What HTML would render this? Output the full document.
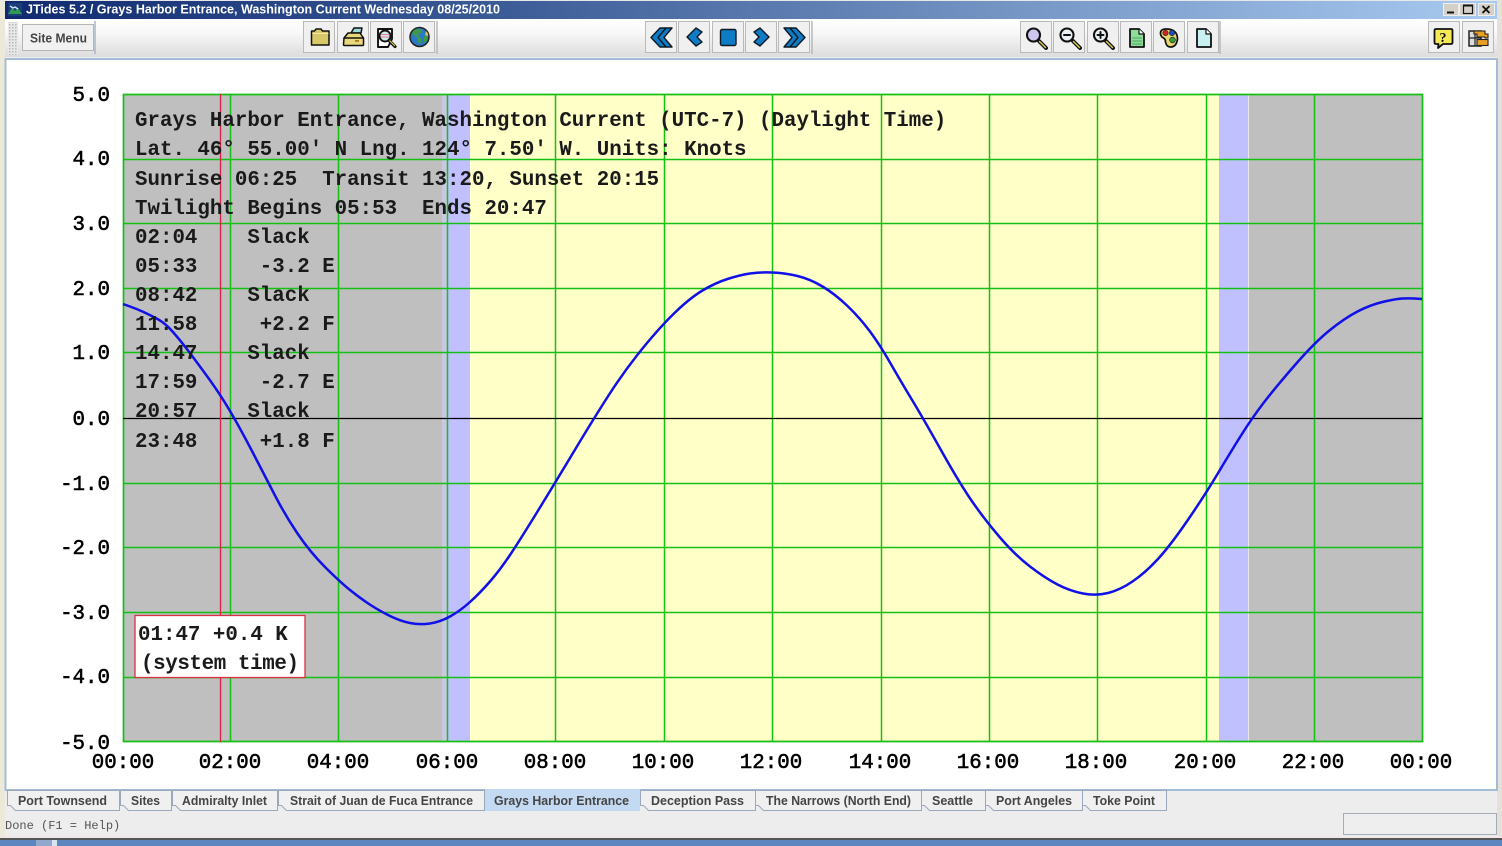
<!DOCTYPE html>
<html><head><meta charset="utf-8"><title>JTides</title>
<style>
html,body{margin:0;padding:0;background:#fff;overflow:hidden}
svg{display:block;filter:blur(.35px)}
text{white-space:pre}
.m{font-family:"Liberation Mono",monospace;font-size:20.8px;font-weight:bold;fill:#1a1a1a}
.a{font-family:"Liberation Mono",monospace;font-size:20.8px;fill:#000;stroke:#000;stroke-width:.55px}
.t{font-family:"Liberation Sans",sans-serif;font-size:12.6px;font-weight:bold;fill:#444}
.b{fill:#f0f0f0;stroke:#b9b9b9}
.k{stroke:#111;stroke-width:1.5;stroke-linejoin:round;stroke-linecap:round}
</style></head><body>
<svg width="1502" height="846" viewBox="0 0 1502 846" xmlns="http://www.w3.org/2000/svg">
<defs>
<linearGradient id="tb" x1="0" x2="1" y1="0" y2="0"><stop offset="0" stop-color="#0f2a70"/><stop offset=".33" stop-color="#3b5b97"/><stop offset=".66" stop-color="#7393c3"/><stop offset="1" stop-color="#a8caf0"/></linearGradient>
<linearGradient id="bar" x1="0" x2="0" y1="0" y2="1"><stop offset="0" stop-color="#ffffff"/><stop offset=".35" stop-color="#f8f8f8"/><stop offset="1" stop-color="#dcdcdc"/></linearGradient>
<pattern id="grip" width="3" height="3" patternUnits="userSpaceOnUse"><rect width="3" height="3" fill="#e8e8e8"/><rect width="1.5" height="1.5" fill="#b8b8b8"/></pattern>
</defs>

<rect width="1502" height="846" fill="#ededed"/>
<rect x="0" y="0" width="5" height="846" fill="#ece9d8"/>
<!-- title bar -->
<rect x="5" y="1" width="1492" height="18" fill="url(#tb)"/>
<rect x="0" y="0" width="1502" height="1" fill="#e8e8e8"/>
<rect x="1497" y="0" width="5" height="840" fill="#e4e2d8"/>
<g>
<rect x="8" y="3" width="14" height="13" fill="#1c3d7a"/>
<path d="M8 14l4-6 3 3 3-3 4 6z" fill="#2f9a55"/>
<path d="M10 6l3 2 2-1 3 2" stroke="#cfe8ff" stroke-width="1.4" fill="none"/>
</g>
<text x="26" y="13.500" font-family="Liberation Sans, sans-serif" font-size="12.600" font-weight="bold" fill="#fff" textLength="474" lengthAdjust="spacingAndGlyphs">JTides 5.2 / Grays Harbor Entrance, Washington Current Wednesday 08/25/2010</text>
<!-- window buttons -->
<g fill="#d4d0c8" stroke="#eeeeee">
<rect x="1443.500" y="3.500" width="15" height="12"/><rect x="1459.500" y="3.500" width="16" height="12"/><rect x="1478.500" y="3.500" width="16" height="12"/>
</g>
<path d="M1447 12.500h7" stroke="#111" stroke-width="2"/>
<rect x="1463.500" y="5.500" width="9" height="8" fill="none" stroke="#111" stroke-width="1.200"/><path d="M1463 5.500h10" stroke="#111" stroke-width="2"/>
<path d="M1482.500 6l7 7m0-7l-7 7" stroke="#111" stroke-width="1.800"/>

<!-- toolbar -->
<rect x="5" y="19" width="1492" height="38" fill="url(#bar)"/>
<rect x="8" y="22" width="10" height="33" fill="url(#grip)"/>
<rect x="22.500" y="24.500" width="71" height="26" fill="#f1f1f1" stroke="#b5b5b5"/>
<path d="M95 21v33" stroke="#aab4c8" stroke-width="1.500"/>
<text x="30" y="42.500" class="t" textLength="57" lengthAdjust="spacingAndGlyphs" style="font-size:13px">Site Menu</text>

<!-- button frames -->
<g class="b">
<rect x="303.500" y="21.500" width="31" height="31"/><rect x="337.500" y="21.500" width="31" height="31"/><rect x="370.500" y="21.500" width="31" height="31"/><rect x="403.500" y="21.500" width="31" height="31"/>
<rect x="645.500" y="21.500" width="31" height="31"/><rect x="678.500" y="21.500" width="31" height="31"/><rect x="712.500" y="21.500" width="31" height="31"/><rect x="745.500" y="21.500" width="31" height="31"/><rect x="778.500" y="21.500" width="31" height="31"/>
<rect x="1020.500" y="21.500" width="31" height="31"/><rect x="1053.500" y="21.500" width="31" height="31"/><rect x="1087.500" y="21.500" width="31" height="31"/><rect x="1120.500" y="21.500" width="31" height="31"/><rect x="1153.500" y="21.500" width="31" height="31"/><rect x="1187.500" y="21.500" width="31" height="31"/>
<rect x="1428.500" y="21.500" width="31" height="31"/><rect x="1462.500" y="21.500" width="31" height="31"/>
</g>
<path d="M437 21v33M812 21v33M1220 21v33" stroke="#b8b8b8" stroke-width="1.500"/>

<!-- left icons -->
<path class="k" d="M311.500 45v-14h3l1.500-2h5l1.500 2h6.500v14z" fill="#d8c868"/>
<path d="M312.500 33.500h16" stroke="#f4eaa8" stroke-width="1"/>
<g class="k">
<path d="M351 33l3-5h8l-1 5z" fill="#9fd8d8"/>
<path d="M344 38l4-5h12l3.500 5v6.500q0 1-1 1h-18q-1 0-1-1z" fill="#e8d87a"/>
<path d="M344 38h19.500" fill="none"/>
</g>
<rect x="355" y="40" width="4" height="1.800" fill="#b07820"/>
<g class="k">
<path d="M378 29h14v10l-4 8h-10z" fill="#fff" stroke-width="1.900"/>
<circle cx="385" cy="36" r="5.500" fill="#cfeaea" stroke-width="1.900"/>
<path d="M389 40.500l6 6" stroke-width="3.200"/>
</g>
<path d="M380.500 34.500h9M380.500 37h9" stroke="#e8789a" stroke-width="1"/>
<path d="M389.500 40.500l5.500 5.500" stroke="#d8c858" stroke-width="1.200"/>
<circle cx="419.500" cy="37" r="9.500" fill="#2a78c8" stroke="#222" stroke-width="1.500"/>
<path d="M414 30q5-2 8 0l-1 3-3 1 1 3 3 2-1 5-3-2-1-5-4-2q-2-2 1-5zM424 36l4 0-1 5-3 2z" fill="#3e9a4a"/>
<path d="M426 31q3 3 2 5l-3-1z" fill="#d8c458"/>

<!-- nav icons -->
<g fill="#0e7cc4" stroke="#0d1a26" stroke-width="1.400" stroke-linejoin="round">
<path d="M666 28L657 37.500L666 47H672L664 37.500L672 28z"/>
<path d="M660 28L651 37.500L660 47H666L658 37.500L666 28z"/>
<path d="M696 28L687 37L696 46L702 42L697 37L702 32z"/>
<rect x="720.500" y="29.500" width="15.500" height="16" rx="1.500"/>
<path d="M760 28L769 37L760 46L754 42L759 37L754 32z"/>
<path d="M790 28L799 37.500L790 47H784L792 37.500L784 28z"/>
<path d="M796 28L805 37.500L796 47H790L798 37.500L790 28z"/>
</g>

<!-- zoom icons -->
<g class="k" fill="none">
<g><path d="M1039 41l7 7" stroke-width="4"/><path d="M1039.500 41.500l6 6" stroke="#d8c858" stroke-width="1.500"/><circle cx="1033.500" cy="35" r="6.500" fill="#cdc4f0" stroke-width="2.100"/></g>
<g><path d="M1073 41l7 7" stroke-width="4"/><path d="M1073.500 41.500l6 6" stroke="#d8c858" stroke-width="1.500"/><circle cx="1067" cy="35" r="6.500" fill="#eaf2f4" stroke-width="2.100"/><path d="M1064 35h6" stroke-width="2"/></g>
<g><path d="M1106 41l7 7" stroke-width="4"/><path d="M1106.500 41.500l6 6" stroke="#d8c858" stroke-width="1.500"/><circle cx="1100.500" cy="35" r="6.500" fill="#eaf2f4" stroke-width="2.100"/><path d="M1097.500 35h6M1100.500 32v6" stroke-width="2"/></g>
<path d="M1130 29h9l5 5v13h-14z" fill="#8fdc98" stroke-width="1.800"/>
<path d="M1139 29v5h5" fill="#fff" stroke-width="1.200"/>
<path d="M1132.500 38h9M1132.500 41h9M1132.500 44h9" stroke="#48a860" stroke-width="1"/>
<path d="M1197 29h9l5 5v13h-14z" fill="#c8f0f0" stroke-width="1.800"/>
<path d="M1206 29v5h5" fill="#fff" stroke-width="1.200"/>
</g>
<path d="M1166 29q-6 0-5.500 5 .5 3 3 4 2 1 2 4 1 5 5 5 6 0 7-8 0-10-11.500-10z" fill="#e8d870" stroke="#111" stroke-width="1.700"/>
<circle cx="1165.500" cy="33" r="2.700" fill="#d82030" stroke="#222" stroke-width=".6"/>
<circle cx="1172" cy="33" r="2.700" fill="#2048c8" stroke="#222" stroke-width=".6"/>
<circle cx="1172.500" cy="40" r="2.900" fill="#389838" stroke="#222" stroke-width=".6"/>

<!-- help icons -->
<path d="M1436 29h15q1.500 0 1.500 1.500v12q0 1.500-1.500 1.500h-8l-5 4 .5-4h-2.500q-1.500 0-1.500-1.500v-12q0-1.500 1.500-1.500z" fill="#f4ea58" stroke="#111" stroke-width="1.800" stroke-linejoin="round"/>
<text x="1439.500" y="42" font-family="Liberation Serif, serif" font-size="14" font-weight="bold" fill="#111">?</text>
<rect x="1469" y="31" width="12" height="15" fill="#dcdcdc" stroke="#222" stroke-width="1.500"/>
<path d="M1469 38h12M1475 31v15" stroke="#222" stroke-width="1.200"/>
<path d="M1474 31h11v3h3v4h-3v-1h-8v-3h-3z" fill="#e8a020" stroke="#222" stroke-width="1.100"/>
<rect x="1477" y="39.500" width="11" height="6" fill="#e8a020" stroke="#222" stroke-width="1.100"/>

<!-- content -->
<rect x="5.500" y="59" width="1491.500" height="731" fill="#fff" stroke="#a4bcd8" stroke-width="2"/>

<!-- plot bands -->
<rect x="123" y="94" width="319" height="648" fill="#bfbfbf"/>
<rect x="442" y="94" width="5" height="648" fill="#c8c8e0"/>
<rect x="447" y="94" width="23" height="648" fill="#c0c0ff"/>
<rect x="470" y="94" width="749" height="648" fill="#ffffc8"/>
<rect x="1219" y="94" width="29" height="648" fill="#c0c0ff"/>
<rect x="1248" y="94" width="174" height="648" fill="#bfbfbf"/>
<path d="M1248.500 94v648" stroke="#e8e8e8"/>

<!-- grid -->
<g stroke="#14c014" stroke-width="1.500" fill="none">
<path d="M123.500 94.500h1299v647h-1299z" stroke-width="1.700"/>
<path d="M230.500 94v648M338.500 94v648M447.500 94v648M555.500 94v648M664.500 94v648M772.500 94v648M881.500 94v648M989.500 94v648M1097.500 94v648M1206.500 94v648M1314.500 94v648"/>
<path d="M123 159.500h1299M123 223.500h1299M123 288.500h1299M123 352.500h1299M123 483.500h1299M123 547.500h1299M123 612.500h1299M123 677.500h1299"/>
</g>
<path d="M123 418.500h1299" stroke="#000" stroke-width="1.200"/>
<path d="M220.500 94v648" stroke="#e02040" stroke-width="1.300"/>

<!-- curve -->
<path fill="none" stroke="#1010e8" stroke-width="2.500" stroke-linejoin="round" d="M123,304 L130,306.500 Q137,309 143.500,312 Q150,315 157.500,319 Q165,323 172.500,331.500 Q180,340 188,350.500 Q196,361 208,377.500 Q220,394 230,411 Q240,428 252.500,452 Q265,476 275,495.500 Q285,515 297.500,533.500 Q310,552 325,567 Q340,582 350,590 Q360,598 369,604 Q378,610 389,615.500 Q400,621 410,623 Q420,625 430,623.500 Q440,622 450,616.500 Q460,611 470,602 Q480,593 490,581.500 Q500,570 510,555 Q520,540 537.500,511.500 Q555,483 574.500,450.500 Q594,418 609.500,394 Q625,370 642.500,348.500 Q660,327 675,312.500 Q690,298 702.500,290.500 Q715,283 727.500,279 Q740,275 750,273.500 Q760,272 772.500,272.500 Q785,273 797.500,276 Q810,279 822.500,286.500 Q835,294 847.500,306 Q860,318 870,331.500 Q880,345 890,362.500 Q900,380 911.500,399 Q923,418 941.500,451 Q960,484 972.500,502 Q985,520 1000,537.500 Q1015,555 1030,566.500 Q1045,578 1057.500,584.500 Q1070,591 1083,593.500 Q1096,596 1108,593 Q1120,590 1132.500,581.500 Q1145,573 1157.500,559.500 Q1170,546 1187.500,520.500 Q1205,495 1217.500,474 Q1230,453 1241,435.500 Q1252,418 1263.500,403 Q1275,388 1295,365 Q1315,342 1330,330 Q1345,318 1357.500,311.500 Q1370,305 1382.500,302 Q1395,299 1402.500,298.500 Q1410,298 1422,299"/>

<!-- overlay text -->
<g class="m">
<text x="135" y="126">Grays Harbor Entrance, Washington Current (UTC-7) (Daylight Time)</text>
<text x="135" y="155">Lat. 46° 55.00' N Lng. 124° 7.50' W. Units: Knots</text>
<text x="135" y="185">Sunrise 06:25  Transit 13:20, Sunset 20:15</text>
<text x="135" y="214">Twilight Begins 05:53  Ends 20:47</text>
<text x="135" y="243">02:04    Slack</text>
<text x="135" y="272">05:33     -3.2 E</text>
<text x="135" y="301">08:42    Slack</text>
<text x="135" y="330">11:58     +2.2 F</text>
<text x="135" y="359">14:47    Slack</text>
<text x="135" y="388">17:59     -2.7 E</text>
<text x="135" y="417">20:57    Slack</text>
<text x="135" y="447">23:48     +1.8 F</text>
</g>

<!-- tooltip -->
<rect x="135" y="615.500" width="170" height="62" fill="#fff" stroke="#d83040" stroke-width="1.300"/>
<g class="m">
<text x="138" y="640">01:47 +0.4 K</text>
<text x="141" y="669" textLength="158" lengthAdjust="spacing">(system time)</text>
</g>

<!-- y axis -->
<g class="a" text-anchor="end">
<text x="110" y="101">5.0</text><text x="110" y="165">4.0</text><text x="110" y="230">3.0</text><text x="110" y="295">2.0</text><text x="110" y="359">1.0</text><text x="110" y="425">0.0</text><text x="110" y="490">-1.0</text><text x="110" y="554">-2.0</text><text x="110" y="619">-3.0</text><text x="110" y="683">-4.0</text><text x="110" y="749">-5.0</text>
</g>
<!-- x axis -->
<g class="a" text-anchor="middle">
<text x="123" y="768">00:00</text><text x="230" y="768">02:00</text><text x="338" y="768">04:00</text><text x="447" y="768">06:00</text><text x="555" y="768">08:00</text><text x="663" y="768">10:00</text><text x="771" y="768">12:00</text><text x="880" y="768">14:00</text><text x="988" y="768">16:00</text><text x="1096" y="768">18:00</text><text x="1205" y="768">20:00</text><text x="1313" y="768">22:00</text><text x="1421" y="768">00:00</text>
</g>

<!-- tabs -->
<g fill="#f0f0f0" stroke="#9aa8bc">
<path d="M7.500 790.500h112v20h-104l-5-5h-3z"/>
<path d="M120.500 790.500h51v20h-43l-5-5h-3z"/>
<path d="M172.500 790.500h105v20h-97l-5-5h-3z"/>
<path d="M278.500 790.500h206v20h-198l-5-5h-3z"/>
<path d="M640.500 790.500h115v20h-107l-5-5h-3z"/>
<path d="M755.500 790.500h166v20h-158l-5-5h-3z"/>
<path d="M921.500 790.500h64v20h-56l-5-5h-3z"/>
<path d="M985.500 790.500h97v20h-89l-5-5h-3z"/>
<path d="M1082.500 790.500h84v20h-76l-5-5h-3z"/>
</g>
<path d="M485 789h155v22h-155z" fill="#c4daf2"/>
<g class="t">
<text x="18" y="805" textLength="89" lengthAdjust="spacingAndGlyphs">Port Townsend</text>
<text x="131" y="805" textLength="29" lengthAdjust="spacingAndGlyphs">Sites</text>
<text x="182" y="805" textLength="85" lengthAdjust="spacingAndGlyphs">Admiralty Inlet</text>
<text x="290" y="805" textLength="183" lengthAdjust="spacingAndGlyphs">Strait of Juan de Fuca Entrance</text>
<text x="494" y="805" textLength="135" lengthAdjust="spacingAndGlyphs">Grays Harbor Entrance</text>
<text x="651" y="805" textLength="93" lengthAdjust="spacingAndGlyphs">Deception Pass</text>
<text x="766" y="805" textLength="145" lengthAdjust="spacingAndGlyphs">The Narrows (North End)</text>
<text x="932" y="805" textLength="41" lengthAdjust="spacingAndGlyphs">Seattle</text>
<text x="996" y="805" textLength="76" lengthAdjust="spacingAndGlyphs">Port Angeles</text>
<text x="1093" y="805" textLength="62" lengthAdjust="spacingAndGlyphs">Toke Point</text>
</g>

<!-- status -->
<text x="5" y="829" font-family="Liberation Mono, monospace" font-size="12" fill="#555">Done (F1 = Help)</text>
<rect x="1343.500" y="813.500" width="153" height="21" fill="#eeeeee" stroke="#a4acb8"/>

<!-- bottom -->
<rect x="0" y="836" width="1502" height="2" fill="#f0e8e8"/>
<rect x="0" y="838" width="1502" height="2" fill="#555"/>
<rect x="0" y="840" width="1502" height="6" fill="#5b86bf"/>
<rect x="36" y="840" width="16" height="6" fill="#8fa8cc"/>
<rect x="52" y="840" width="5" height="6" fill="#d8e4f0"/>
</svg>
</body></html>
